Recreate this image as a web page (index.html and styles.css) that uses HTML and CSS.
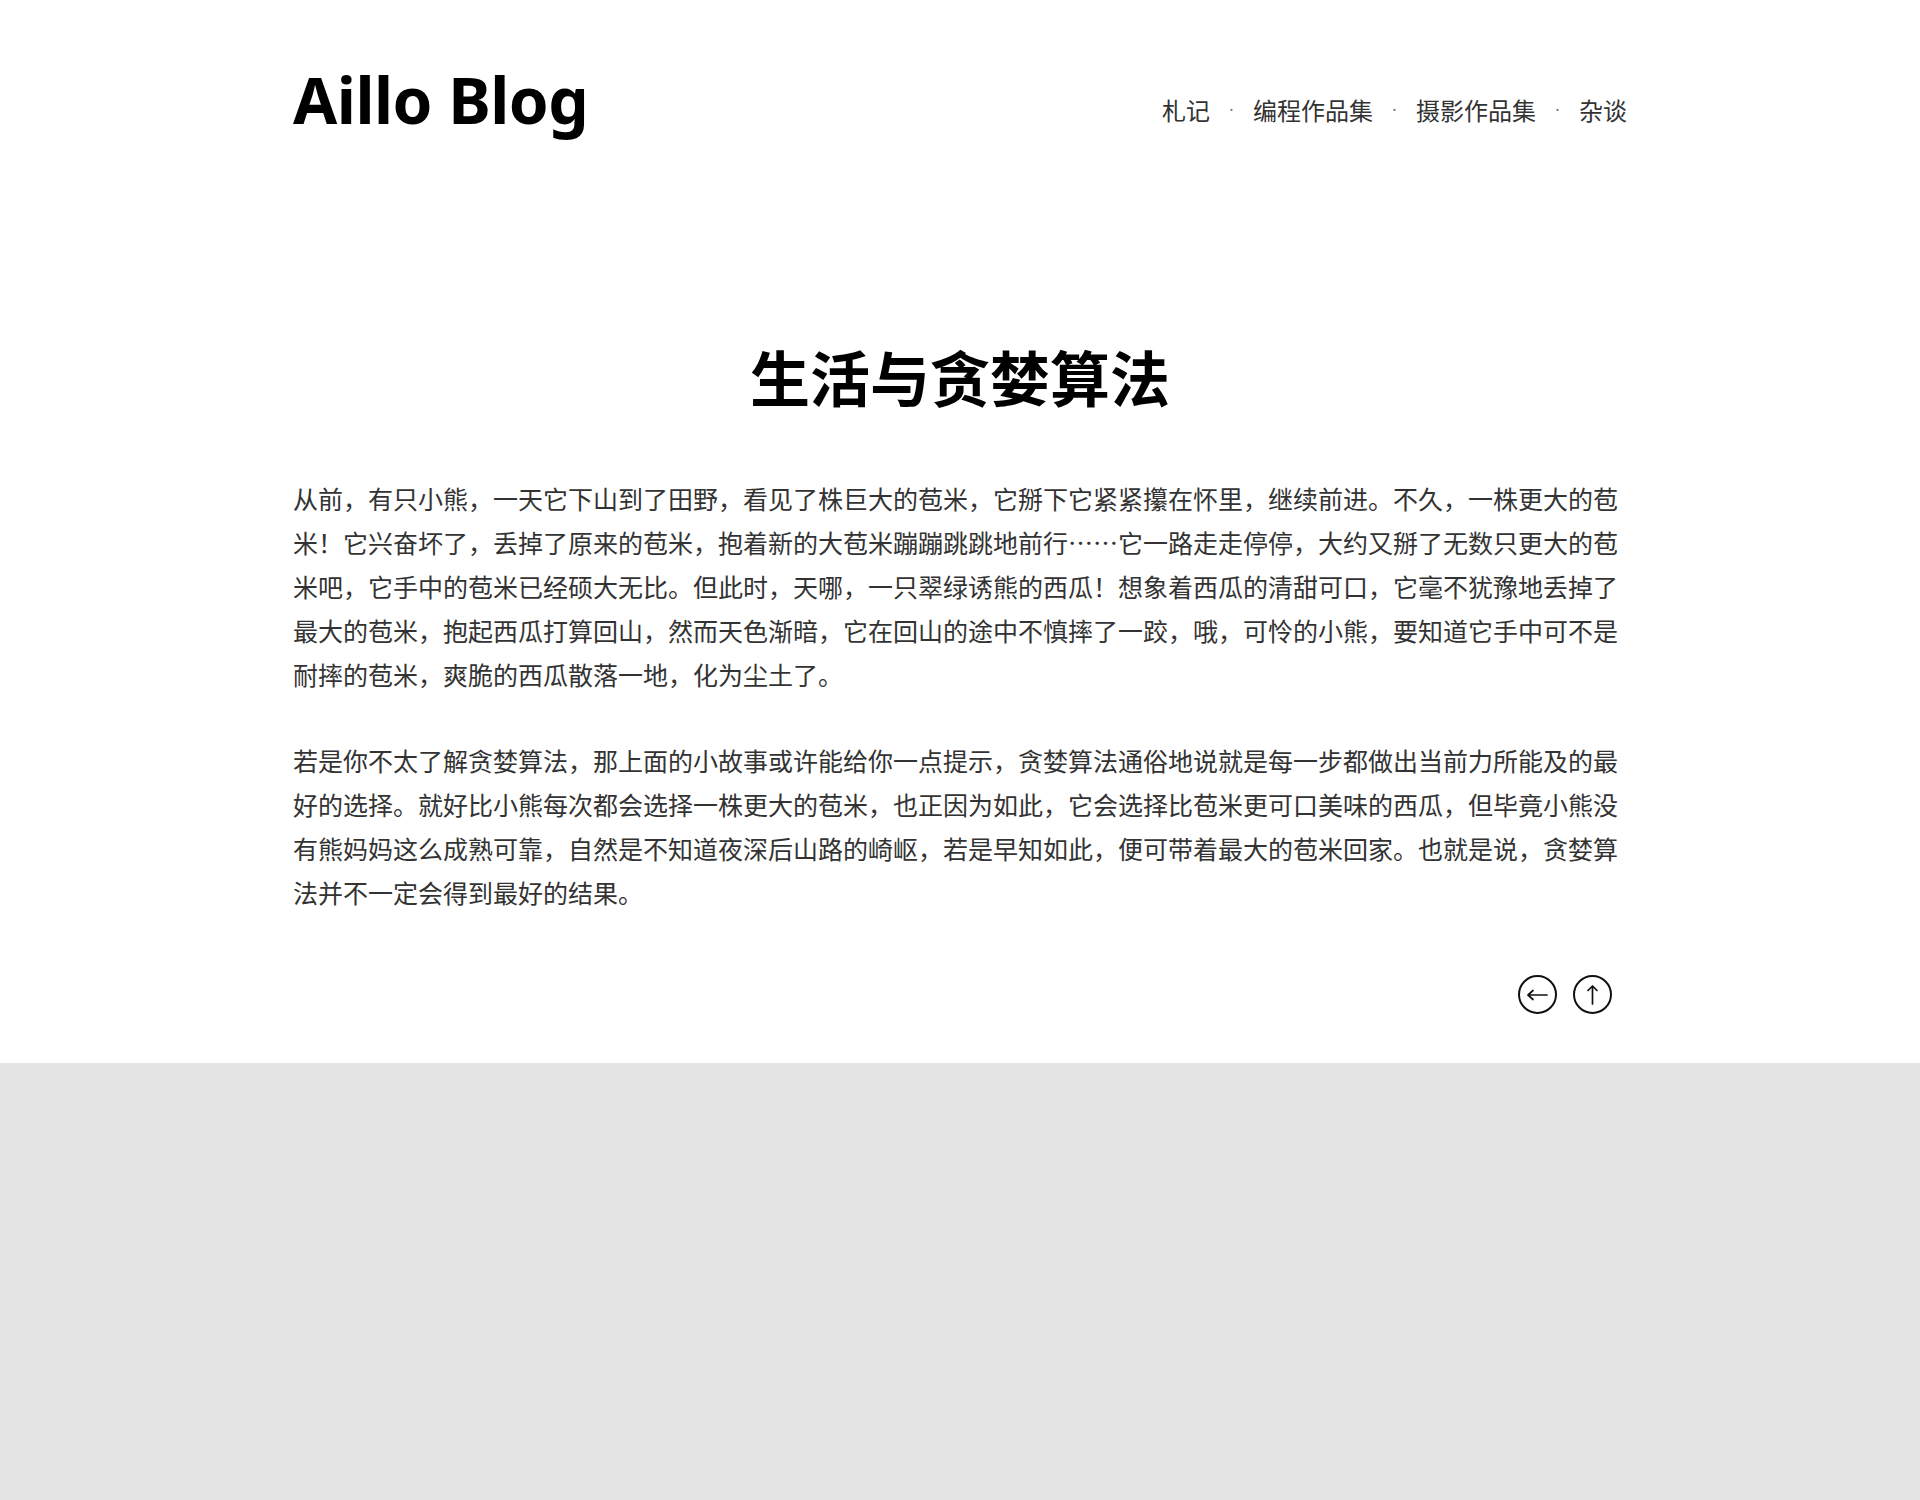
FILE: index.html
```html
<!DOCTYPE html>
<html lang="zh-CN">
<head>
<meta charset="utf-8">
<title>生活与贪婪算法 - Aillo Blog</title>
<link rel="stylesheet" href="styles.css">
</head>
<body>
<div class="page">
  <div class="wrap">
    <header class="header">
      <a class="logo" href="#">Aillo Blog</a>
      <nav class="nav">
        <a href="#">札记</a><span class="dot">·</span>
        <a href="#">编程作品集</a><span class="dot">·</span>
        <a href="#">摄影作品集</a><span class="dot">·</span>
        <a href="#">杂谈</a>
      </nav>
    </header>
    <article class="post">
      <h1 class="title">生活与贪婪算法</h1>
      <p>从前，有只小熊，一天它下山到了田野，看见了株巨大的苞米，它掰下它紧紧攥在怀里，继续前进。不久，一株更大的苞米！它兴奋坏了，丢掉了原来的苞米，抱着新的大苞米蹦蹦跳跳地前行……它一路走走停停，大约又掰了无数只更大的苞米吧，它手中的苞米已经硕大无比。但此时，天哪，一只翠绿诱熊的西瓜！想象着西瓜的清甜可口，它毫不犹豫地丢掉了最大的苞米，抱起西瓜打算回山，然而天色渐暗，它在回山的途中不慎摔了一跤，哦，可怜的小熊，要知道它手中可不是耐摔的苞米，爽脆的西瓜散落一地，化为尘土了。</p>
      <p>若是你不太了解贪婪算法，那上面的小故事或许能给你一点提示，贪婪算法通俗地说就是每一步都做出当前力所能及的最好的选择。就好比小熊每次都会选择一株更大的苞米，也正因为如此，它会选择比苞米更可口美味的西瓜，但毕竟小熊没有熊妈妈这么成熟可靠，自然是不知道夜深后山路的崎岖，若是早知如此，便可带着最大的苞米回家。也就是说，贪婪算法并不一定会得到最好的结果。</p>
      <div class="post-nav">
        <a class="circle-btn" href="#" aria-label="上一篇">
          <svg width="39" height="39" viewBox="0 0 39 39"><circle cx="19.5" cy="19.5" r="18.5" fill="none" stroke="#111" stroke-width="2"/><path d="M10 20 H29 M15 15.5 L10 20 L15 24.5" fill="none" stroke="#111" stroke-width="1.7" stroke-linecap="round" stroke-linejoin="round"/></svg>
        </a>
        <a class="circle-btn" href="#" aria-label="回到顶部">
          <svg width="39" height="39" viewBox="0 0 39 39"><circle cx="19.5" cy="19.5" r="18.5" fill="none" stroke="#111" stroke-width="2"/><path d="M19.5 11 V29 M15 15.5 L19.5 11 L24 15.5" fill="none" stroke="#111" stroke-width="1.7" stroke-linecap="round" stroke-linejoin="round"/></svg>
        </a>
      </div>
    </article>
  </div>
</div>
<footer class="footer"></footer>
</body>
</html>
```
FILE: styles.css
```css
html {
  background: #e5e5e5;
}
body {
  margin: 0;
  font-family: "Noto Sans", "Noto Sans CJK SC", sans-serif;
  color: #333;
}
a {
  color: inherit;
  text-decoration: none;
}
.page {
  background: #fff;
}
.wrap {
  max-width: 1334px;
  margin: 0 auto;
}
.header {
  display: flex;
  justify-content: space-between;
  align-items: flex-start;
  padding-top: 60px;
}
.logo {
  font-family: "Noto Sans", sans-serif;
  font-weight: 700;
  font-size: 64px;
  line-height: 80px;
  color: #000;
  letter-spacing: -0.5px;
}
.nav {
  display: flex;
  align-items: center;
  padding-top: 34px;
  font-family: "Noto Sans CJK SC", sans-serif;
  font-size: 24px;
  line-height: 32px;
  color: #333;
}
.dot {
  display: inline-block;
  width: 8px;
  margin: 0 17.5px;
  text-align: center;
  font-family: "Noto Sans", sans-serif;
  font-size: 16px;
  color: #777;
}
.post {
  padding-bottom: 49px;
}
.title {
  margin: 196px 0 60px;
  text-align: center;
  font-family: "Noto Sans CJK SC", sans-serif;
  font-weight: 700;
  font-size: 60px;
  line-height: 80px;
  color: #000;
}
.post p {
  margin: 0 0 42px;
  font-family: "Noto Sans CJK SC", sans-serif;
  font-size: 25px;
  line-height: 44px;
  color: #333;
}
.post p:last-of-type {
  margin-bottom: 61px;
}
.post-nav {
  display: flex;
  justify-content: flex-end;
  gap: 16px;
  padding-right: 15px;
}
.circle-btn {
  display: block;
  width: 39px;
  height: 39px;
}
.circle-btn svg {
  display: block;
}
.footer {
  height: 437px;
}
```
